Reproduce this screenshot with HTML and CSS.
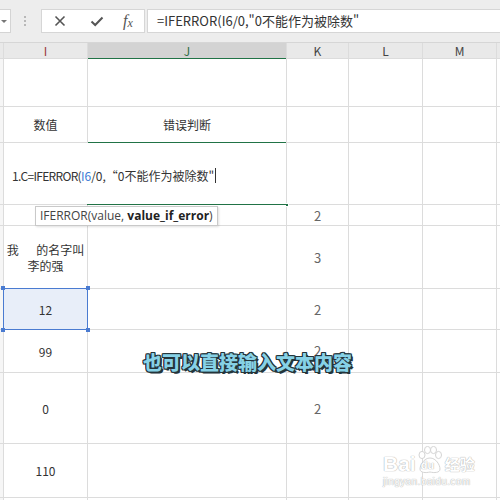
FILE: index.html
```html
<!DOCTYPE html>
<html lang="zh">
<head>
<meta charset="utf-8">
<title>IFERROR</title>
<link rel="stylesheet" href="styles.css">
</head>
<body>
<div class="page">
  <div class="toolbar">
    <div class="namebox"><span class="arrow"></span></div>
    <div class="dots"><i></i><i></i><i></i></div>
    <div class="btns">
      <svg class="ico" width="12" height="12" viewBox="0 0 12 12"><path d="M1.5 1.5 L10.5 10.5 M10.5 1.5 L1.5 10.5" stroke="#555" stroke-width="1.6" fill="none"/></svg>
      <svg class="ico" width="14" height="12" viewBox="0 0 14 12"><path d="M1.5 6.5 L5.2 10 L12.5 2.5" stroke="#555" stroke-width="2" fill="none"/></svg>
      <span class="fx">f<sub>x</sub></span>
    </div>
    <div class="formula">=IFERROR(I6/0,"0不能作为被除数"</div>
  </div>

  <div class="sheet">
    <div class="grid">
      <!-- header -->
      <div class="hd"></div>
      <div class="hd hd-i">I</div>
      <div class="hd hd-act">J</div>
      <div class="hd">K</div>
      <div class="hd">L</div>
      <div class="hd">M</div>
      <div class="hd"></div>
      <!-- r1 -->
      <div class="rh"></div><div class="c"></div><div class="c"></div><div class="c"></div><div class="c"></div><div class="c"></div><div class="c"></div>
      <!-- r2 -->
      <div class="rh"></div><div class="c">数值</div><div class="c green-b">错误判断</div><div class="c"></div><div class="c"></div><div class="c"></div><div class="c"></div>
      <!-- r3 editing -->
      <div class="rh"></div>
      <div class="c edit"><span class="tight">1.C=IFERROR(</span><span class="ref">I6</span>/0,“0不能作为被除数"<span class="caret"></span><span class="handle-g"></span></div>
      <div class="c"></div><div class="c"></div><div class="c"></div><div class="c"></div>
      <!-- r4 -->
      <div class="rh"></div><div class="c"></div><div class="c"></div><div class="c num">2</div><div class="c"></div><div class="c"></div><div class="c"></div>
      <!-- r5 -->
      <div class="rh"></div><div class="c wrap">我　  的名字叫<br>李的强</div><div class="c"></div><div class="c num">3</div><div class="c"></div><div class="c"></div><div class="c"></div>
      <!-- r6 -->
      <div class="rh"></div><div class="c sel">12<span class="h tl"></span><span class="h tr"></span><span class="h bl"></span><span class="h br"></span></div><div class="c"></div><div class="c num">2</div><div class="c"></div><div class="c"></div><div class="c"></div>
      <!-- r7 -->
      <div class="rh"></div><div class="c">99</div><div class="c"></div><div class="c num up">2</div><div class="c"></div><div class="c"></div><div class="c"></div>
      <!-- r8 -->
      <div class="rh"></div><div class="c">0</div><div class="c"></div><div class="c num">2</div><div class="c"></div><div class="c"></div><div class="c"></div>
      <!-- r9 -->
      <div class="rh"></div><div class="c">110</div><div class="c"></div><div class="c"></div><div class="c"></div><div class="c"></div><div class="c"></div>
      <!-- r10 -->
      <div class="rh"></div><div class="c"></div><div class="c"></div><div class="c"></div><div class="c"></div><div class="c"></div><div class="c"></div>
    </div>

    <div class="tip">IFERROR(value, <b>value_if_error</b>)</div>
    <div class="caption">也可以直接输入文本内容</div>
    <div class="wm">
      <div class="wm-top">
        <span class="wm-bai">Bai</span>
        <span class="wm-paw">
          <svg width="26" height="28" viewBox="0 0 26 28">
            <g fill="#fff" stroke="#d4d4d4" stroke-width="1">
              <ellipse cx="5" cy="9" rx="3" ry="3.6"/>
              <ellipse cx="10.5" cy="4" rx="3" ry="3.6"/>
              <ellipse cx="16.5" cy="4" rx="3" ry="3.6"/>
              <ellipse cx="21.5" cy="9" rx="3" ry="3.6"/>
              <path d="M13 12 C7 12 3 19 3 23 C3 27 9 27 13 26 C17 27 23 27 23 23 C23 19 19 12 13 12 Z"/>
            </g>
          </svg>
          <span class="wm-du">du</span>
        </span>
        <span class="wm-jy">经验</span>
      </div>
      <div class="wm-url">jingyan.baidu.com</div>
    </div>
  </div>
</div>
</body>
</html>
```

FILE: styles.css
```css
html, body {
  margin: 0;
  padding: 0;
  background: #ffffff;
}

.page {
  width: 500px;
  height: 500px;
  overflow: hidden;
  font-family: "Noto Sans CJK SC", "Noto Sans", sans-serif;
  color: #333;
}

/* ---------- toolbar ---------- */
.toolbar {
  height: 42px;
  background: #ededed;
  border-bottom: 1px solid #d6d6d6;
  display: flex;
  align-items: center;
}

.namebox {
  width: 10px;
  height: 22px;
  background: #fff;
  border: 1px solid #d4d4d4;
  border-left: none;
  display: flex;
  align-items: center;
}

.arrow {
  margin-left: 1px;
  width: 0;
  height: 0;
  border-left: 3px solid transparent;
  border-right: 3px solid transparent;
  border-top: 3px solid #777;
}

.dots {
  margin-left: 13px;
  display: flex;
  flex-direction: column;
  gap: 2px;
}

.dots i {
  display: block;
  width: 2px;
  height: 2px;
  background: #b8b8b8;
}

.btns {
  margin-left: 15px;
  width: 102px;
  height: 22px;
  background: #fff;
  border: 1px solid #d6d6d6;
  display: flex;
  align-items: center;
}

.btns .ico:first-child {
  margin-left: 12px;
}

.btns .ico:nth-child(2) {
  margin-left: 24px;
}

.fx {
  margin-left: 19px;
  font-family: "Liberation Serif", serif;
  font-style: italic;
  font-size: 16px;
  color: #555;
  line-height: 1;
}

.fx sub {
  font-size: 12px;
  vertical-align: -1px;
}

.formula {
  margin-left: 2px;
  flex: 1;
  height: 22px;
  background: #fff;
  border: 1px solid #d6d6d6;
  border-right: none;
  padding-left: 9px;
  font-size: 13px;
  line-height: 22px;
  color: #333;
  white-space: nowrap;
}

/* ---------- sheet ---------- */
.sheet {
  position: relative;
  height: 457px;
}

.grid {
  display: grid;
  grid-template-columns: 3px 83px 198px 61px 73px 73px 1fr;
  grid-template-rows: 15px 47px 35px 61px 20px 62px 40px 42px 70px 53px 1fr;
  gap: 1px;
  background: #dcdcdc;
  height: 457px;
  font-size: 12px;
}

.hd {
  background: #e9e9e9;
  font-size: 12px;
  color: #444;
  display: flex;
  align-items: center;
  justify-content: center;
  line-height: 1;
}

.hd-i {
  color: #9a3b3b;
}

.hd-act {
  background: #d3d3d3;
  color: #2f6e45;
  box-shadow: 0 1px 0 #217346;
}

.rh {
  background: #f6f6f6;
}

.c {
  background: #fff;
  display: flex;
  align-items: center;
  justify-content: center;
  white-space: nowrap;
  color: #333;
}

.num {
  color: #666;
  font-size: 13px;
}

.up {
  align-items: flex-start;
  padding-top: 11px;
}

.green-b {
  box-shadow: 0 1px 0 #217346;
}

.edit {
  grid-column: span 2;
  justify-content: flex-start;
  padding-left: 8px;
  padding-top: 3px;
  font-size: 12px;
  position: relative;
}

.tight {
  letter-spacing: -0.7px;
}

.edit::after {
  content: "";
  position: absolute;
  left: 83px;
  right: 0;
  bottom: -1px;
  height: 1px;
  background: #217346;
}

.ref {
  color: #3b7bd6;
}

.caret {
  display: inline-block;
  width: 1px;
  height: 15px;
  background: #333;
  margin-left: 1px;
}

.handle-g {
  position: absolute;
  right: -3px;
  bottom: -3px;
  width: 4px;
  height: 4px;
  background: #217346;
  border: 1px solid #fff;
  box-sizing: border-box;
}

.wrap {
  white-space: pre;
  text-align: center;
  line-height: 16px;
  padding-top: 2px;
}

.sel {
  background: #e8eef9;
  position: relative;
  z-index: 1;
  outline: 1px solid #4a7bd1;
}

.h {
  position: absolute;
  width: 4px;
  height: 4px;
  background: #4a7bd1;
}

.tl { left: -3px; top: -3px; }
.tr { right: -3px; top: -3px; }
.bl { left: -3px; bottom: -3px; }
.br { right: -3px; bottom: -3px; }

/* ---------- overlays ---------- */
.tip {
  position: absolute;
  left: 35px;
  top: 163px;
  height: 18px;
  padding: 0 4px;
  background: #fff;
  border: 1px solid #c9c9c9;
  box-shadow: 1px 1px 2px rgba(0, 0, 0, 0.12);
  font-family: "Open Sans", "Liberation Sans", sans-serif;
  font-size: 12px;
  line-height: 18px;
  color: #444;
  white-space: nowrap;
  z-index: 3;
}

.tip b {
  color: #222;
}

.caption {
  position: absolute;
  left: 143px;
  top: 307px;
  font-family: "Noto Sans CJK SC", sans-serif;
  font-weight: 900;
  font-size: 19px;
  line-height: 24px;
  color: #86d1e6;
  white-space: nowrap;
  text-shadow:
    -1px -1px 0 #24343a, 1px -1px 0 #24343a, -1px 1px 0 #24343a, 1px 1px 0 #24343a,
    0 -1px 0 #24343a, 0 1px 0 #24343a, -1px 0 0 #24343a, 1px 0 0 #24343a,
    2px 2px 0 #24343a;
  z-index: 4;
}

.wm {
  position: absolute;
  left: 383px;
  top: 403px;
  color: #fff;
  font-family: "Liberation Sans", "Noto Sans CJK SC", sans-serif;
  z-index: 2;
}

.wm-top {
  display: flex;
  align-items: flex-end;
}

.wm-bai {
  font-size: 21px;
  font-weight: bold;
  line-height: 20px;
  text-shadow: 0 0 1px #b0b0b0, 0 0 1px #b0b0b0;
}

.wm-paw {
  position: relative;
  width: 26px;
  height: 28px;
  margin-left: 1px;
}

.wm-paw svg {
  display: block;
}

.wm-du {
  position: absolute;
  left: 4px;
  bottom: 3px;
  font-size: 11px;
  font-weight: bold;
  line-height: 1;
  color: #fff;
  text-shadow: 0 0 1px #b0b0b0, 0 0 1px #b0b0b0;
}

.wm-jy {
  margin-left: 2px;
  font-family: "Noto Sans CJK SC", sans-serif;
  font-size: 15px;
  font-weight: bold;
  line-height: 20px;
  text-shadow: 0 0 1px #b0b0b0, 0 0 1px #b0b0b0;
}

.wm-url {
  font-size: 10px;
  line-height: 12px;
  margin-top: 2px;
  letter-spacing: 0.4px;
  text-shadow: 0 0 1px #b0b0b0, 0 0 1px #b0b0b0;
}
```
